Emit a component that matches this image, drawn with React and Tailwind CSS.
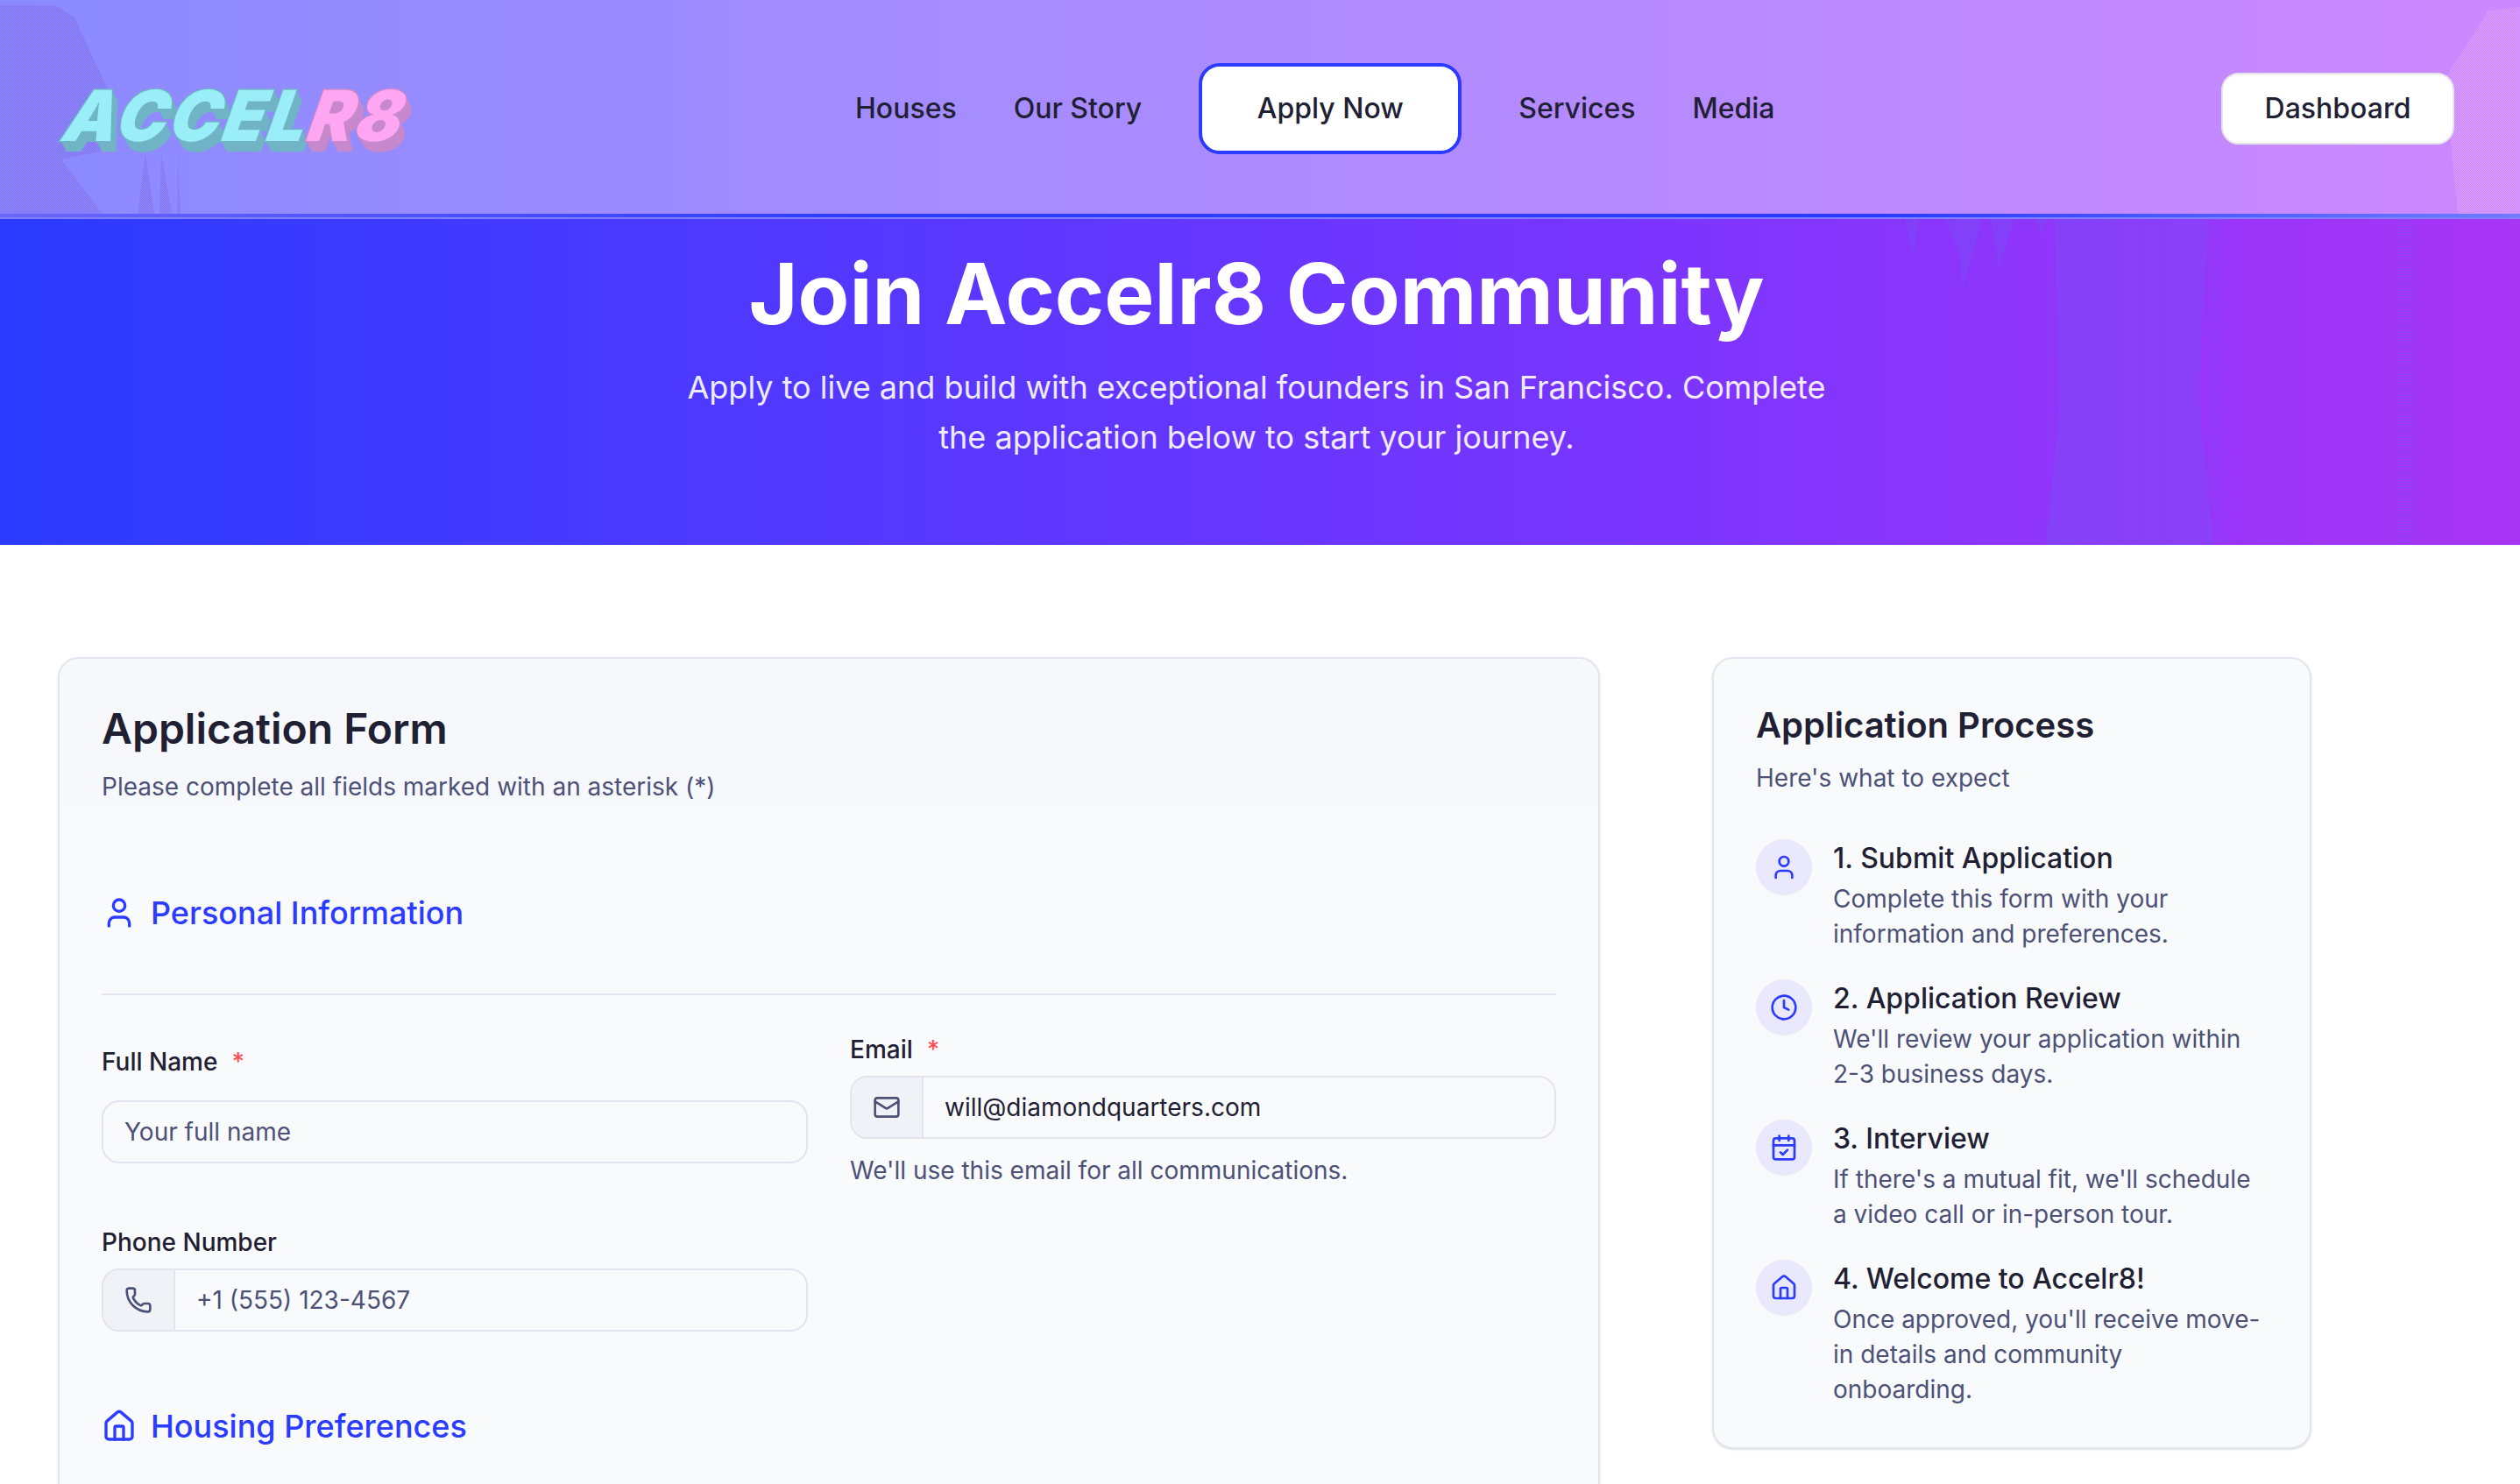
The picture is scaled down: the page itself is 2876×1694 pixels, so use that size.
import React from 'react';
import { User, Mail, Phone, House, Clock, CalendarCheck } from 'lucide-react';

const steps = [
  { icon: User, title: '1. Submit Application', text: 'Complete this form with your information and preferences.' },
  { icon: Clock, title: '2. Application Review', text: "We'll review your application within 2-3 business days." },
  { icon: CalendarCheck, title: '3. Interview', text: "If there's a mutual fit, we'll schedule a video call or in-person tour." },
  { icon: House, title: '4. Welcome to Accelr8!', text: "Once approved, you'll receive move-in details and community onboarding." },
];

const navLink = 'text-[32px] font-medium text-[#1f2033]';

// the dithered patches that sit over the header and hero gradients
const HeaderNoise = () => (
  <svg className="absolute inset-0 pointer-events-none" width="2876" height="244" viewBox="0 0 2876 244">
    <defs>
      <pattern id="dither-a" width="2" height="2" patternUnits="userSpaceOnUse">
        <rect width="1" height="1" fill="#8470f4" />
        <rect x="1" y="1" width="1" height="1" fill="#8470f4" />
      </pattern>
      <pattern id="dither-b" width="2" height="2" patternUnits="userSpaceOnUse">
        <rect width="1" height="1" fill="#d99eff" />
        <rect x="1" y="1" width="1" height="1" fill="#d99eff" />
      </pattern>
    </defs>
    <path d="M0 6H64L85 20L122 100L118 172L70 182L117 244H0Z" fill="url(#dither-a)" />
    <path d="M166 174L157 244H176ZM184 174L182 244H196ZM203 174L202 244H206Z" fill="url(#dither-a)" />
    <path d="M2876 8L2840 12L2790 90L2805 244H2876Z" fill="url(#dither-b)" />
  </svg>
);

const HeroNoise = () => (
  <svg className="absolute inset-0 pointer-events-none" width="2876" height="372" viewBox="0 0 2876 372">
    <defs>
      <pattern id="dither-c" width="3" height="2" patternUnits="userSpaceOnUse">
        <rect width="1" height="1" fill="#6f55f5" />
        <rect x="1.5" y="1" width="1" height="1" fill="#6f55f5" />
      </pattern>
      <pattern id="dither-d" width="3" height="3" patternUnits="userSpaceOnUse">
        <rect width="1" height="1" fill="#6f55f5" />
      </pattern>
    </defs>
    <path d="M2174 0H2190L2183 42ZM2220 0H2262L2240 80L2236 40ZM2272 0H2298L2282 56ZM2324 0H2336L2330 18Z" fill="url(#dither-c)" />
    <path d="M2345 0H2520L2510 200L2525 372H2335L2350 220Z" fill="url(#dither-c)" />
    <path d="M2520 0H2540V372H2520Z" fill="url(#dither-d)" />
    <path d="M2733 0H2757V372H2733Z" fill="url(#dither-d)" />
  </svg>
);

const FieldLabel = ({ children, required, className }) => (
  <label className={`block text-[28px] leading-[40px] font-medium text-[#1f2033] ${className}`}>
    {children}
    {required && <span className="ml-4 text-[#ff4d55]">*</span>}
  </label>
);

const AddonInput = ({ icon: Icon, value, placeholder }) => (
  <div className="flex h-[72px] rounded-[20px] border-2 border-[#e2e4ee] overflow-hidden">
    <span className="flex w-[82px] items-center justify-center border-r-2 border-[#e2e4ee] bg-[#f1f2f7] text-[#4c5178]">
      <Icon size={32} strokeWidth={2} />
    </span>
    <input
      type="text"
      readOnly
      value={value}
      placeholder={placeholder}
      className="flex-1 bg-transparent px-[24px] text-[28px] text-[#1f2033] placeholder:text-[#4c5178] outline-none"
    />
  </div>
);

const SectionTitle = ({ icon: Icon, children }) => (
  <div className="flex items-center gap-[16px] text-[#2b3bff]">
    <Icon size={40} strokeWidth={2} />
    <h3 className="text-[36px] leading-[52px] font-medium">{children}</h3>
  </div>
);

const App = () => {
  return (
    <div className="h-[1694px] overflow-hidden bg-white font-['Inter',sans-serif]">
      <header className="relative h-[250px] bg-[linear-gradient(90deg,#8a8aff_0%,#a68cff_40%,#cc88ff_100%)]">
        <HeaderNoise />
        <div className="relative flex h-[244px] items-center pl-[66px] pr-[75px] pt-[4px]">
          <div className="w-[910px] shrink-0 pt-[16px] pl-[10px]">
            <span className="inline-block origin-left text-[80px] leading-none font-black italic tracking-[0.04em] text-[#99eef8] [transform:skewX(-11deg)_scaleX(0.96)] [-webkit-text-stroke:3px_#70b4c6] [paint-order:stroke_fill] [text-shadow:1px_1px_0_#70b4c6,2px_3px_0_#70b4c6,3px_4px_0_#70b4c6,4px_5px_0_#70b4c6,5px_7px_0_#70b4c6,6px_8px_0_#70b4c6,7px_9px_0_#70b4c6,8px_11px_0_#70b4c6,9px_12px_0_#70b4c6]">
              ACCEL
              <span className="text-[#ffa6f2] [-webkit-text-stroke:3px_#c788cc] [text-shadow:1px_1px_0_#c788cc,2px_3px_0_#c788cc,3px_4px_0_#c788cc,4px_5px_0_#c788cc,5px_7px_0_#c788cc,6px_8px_0_#c788cc,7px_9px_0_#c788cc,8px_11px_0_#c788cc,9px_12px_0_#c788cc]">R8</span>
            </span>
          </div>
          <nav className="flex items-center gap-[65px]">
            <a className={navLink}>Houses</a>
            <a className={navLink}>Our Story</a>
            <a className={`${navLink} flex h-[104px] w-[300px] items-center justify-center rounded-[24px] border-4 border-[#2b3bff] bg-white`}>Apply Now</a>
            <a className={navLink}>Services</a>
            <a className={navLink}>Media</a>
          </nav>
          <button className="ml-auto h-[82px] w-[266px] rounded-[20px] border-2 border-[#e2e4ee] bg-white text-[32px] font-medium text-[#1f2033]">
            Dashboard
          </button>
        </div>
        <div className="h-[4px] bg-[linear-gradient(90deg,#6a66fb_0%,#2b3bff_35%,#2b3bff_75%,#6f7cff_100%)]" />
        <div className="h-[2px] bg-[#7f80ff]" />
      </header>

      <section className="relative h-[372px] bg-[linear-gradient(90deg,#2b3bff_0%,#7a35ff_65%,#a935f5_100%)] text-center">
        <HeroNoise />
        <div className="relative flex flex-col items-center pt-[30px] pr-[8px]">
          <h1 className="text-[96px] leading-[110px] font-bold text-white">Join Accelr8 Community</h1>
          <p className="mt-[24px] w-[1320px] text-[36px] leading-[57px] text-white/90">
            Apply to live and build with exceptional founders in San Francisco. Complete the application below to start your journey.
          </p>
        </div>
      </section>

      <main className="flex items-start gap-[128px] pl-[66px] pt-[128px]">
        <div className="w-[1760px] shrink-0 rounded-[24px] border-2 border-[#e2e4ee] bg-[#f9fafc] pb-[200px] shadow-sm">
          <div className="rounded-t-[24px] bg-[#f7f8fb] px-[48px] pt-[48px]">
            <h2 className="text-[48px] leading-[64px] font-semibold text-[#1f2033]">Application Form</h2>
            <p className="mt-[14px] text-[28px] leading-[40px] text-[#4c5178]">Please complete all fields marked with an asterisk (*)</p>
          </div>
          <div className="px-[48px] pt-[98px]">
            <SectionTitle icon={User}>Personal Information</SectionTitle>
            <div className="mt-[66px] border-t-2 border-[#e2e4ee]" />
            <div className="mt-[42px] grid grid-cols-2 gap-x-[48px]">
              <div>
                <FieldLabel required className="mt-[14px] mb-[24px]">Full Name</FieldLabel>
                <input
                  type="text"
                  placeholder="Your full name"
                  className="h-[72px] w-full rounded-[20px] border-2 border-[#e2e4ee] bg-transparent px-[24px] text-[28px] placeholder:text-[#4c5178] outline-none"
                />
                <FieldLabel className="mt-[70px] mb-[10px]">Phone Number</FieldLabel>
                <AddonInput icon={Phone} placeholder="+1 (555) 123-4567" />
              </div>
              <div>
                <FieldLabel required className="mb-[10px]">Email</FieldLabel>
                <AddonInput icon={Mail} value="will@diamondquarters.com" />
                <p className="mt-[16px] text-[28px] leading-[40px] text-[#4c5178]">We'll use this email for all communications.</p>
              </div>
            </div>
            <div className="mt-[82px]">
              <SectionTitle icon={House}>Housing Preferences</SectionTitle>
            </div>
          </div>
        </div>

        <aside className="w-[684px] shrink-0 rounded-[24px] border-2 border-[#e2e4ee] bg-[#f9fafc] px-[48px] pt-[48px] pb-[46px] shadow-sm">
          <h2 className="text-[40px] leading-[56px] font-semibold text-[#1f2033]">Application Process</h2>
          <p className="mt-[12px] text-[28px] leading-[40px] text-[#4c5178]">Here's what to expect</p>
          <div className="mt-[50px] flex flex-col gap-[32px]">
            {steps.map((step) => (
              <div key={step.title} className="flex gap-[24px]">
                <span className="flex h-[64px] w-[64px] shrink-0 items-center justify-center rounded-full bg-[#e9e8fd] text-[#2b3bff]">
                  <step.icon size={32} strokeWidth={2} />
                </span>
                <div>
                  <h4 className="text-[32px] leading-[44px] font-medium text-[#1f2033]">{step.title}</h4>
                  <p className="mt-[4px] text-[28px] leading-[40px] text-[#4c5178]">{step.text}</p>
                </div>
              </div>
            ))}
          </div>
        </aside>
      </main>
    </div>
  );
};

export default App;
